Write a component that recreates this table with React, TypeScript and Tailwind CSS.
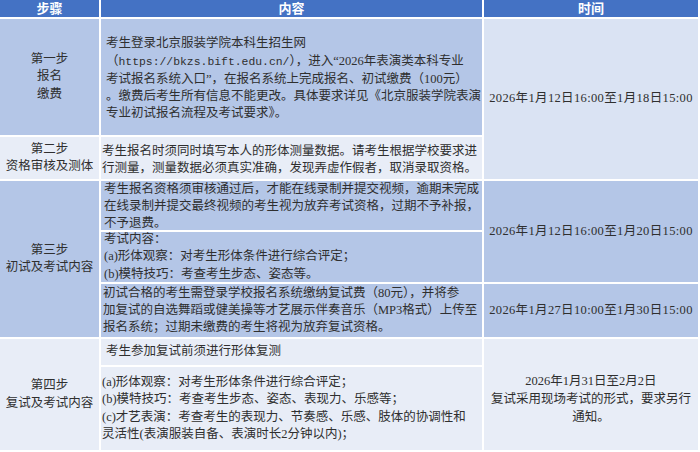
const font = "font-['Liberation_Serif','Noto_Sans_CJK_SC',serif]";

const mid = "bg-[#b4c6e7]";
const light = "bg-[#dae3f3]";
const pale = "bg-[#e8edf7]";

function Lines({ lines }: { lines: React.ReactNode[] }) {
  return (
    <div>
      {lines.map((l, i) => (
        <div key={i} className="whitespace-nowrap">
          {l}
        </div>
      ))}
    </div>
  );
}

function StepCell({ className, lines }: { className: string; lines: string[] }) {
  return (
    <div className={`${className} flex items-center justify-center text-center`}>
      <Lines lines={lines} />
    </div>
  );
}

function TextCell({ className, lines, pad = "pl-[3px]" }: { className: string; lines: React.ReactNode[]; pad?: string }) {
  return (
    <div className={`${className} ${pad} flex items-center`}>
      <Lines lines={lines} />
    </div>
  );
}

export default function App() {
  return (
    <div
      className={`${font} grid w-[698px] grid-cols-[99px_381px_214px] grid-rows-[17px_116px_42px_49px_50px_53px_26px_83px] gap-[2px] bg-white text-[12.5px] leading-[17.3px] text-[#2f2f2f]`}
    >
      {/* header */}
      <div className="col-start-1 row-start-1 flex items-center justify-center bg-[#4472c4] text-[13px] font-semibold text-white">
        步骤
      </div>
      <div className="col-start-2 row-start-1 flex items-center justify-center bg-[#4472c4] text-[13px] font-semibold text-white">
        内容
      </div>
      <div className="col-start-3 row-start-1 flex items-center justify-center bg-[#4472c4] text-[13px] font-semibold text-white">
        时间
      </div>

      {/* 第一步 */}
      <StepCell className={`col-start-1 row-start-2 ${mid}`} lines={["第一步", "报名", "缴费"]} />
      <TextCell
        className={`col-start-2 row-start-2 ${mid} pt-[4px]`}
        pad="pl-[5px]"
        lines={[
          "考生登录北京服装学院本科生招生网",
          <>
            （<span className="font-['Liberation_Mono',monospace] text-[11.4px]">https://bkzs.bift.edu.cn/</span>），进入“2026年表演类本科专业
          </>,
          "考试报名系统入口”，在报名系统上完成报名、初试缴费（100元）",
          "。缴费后考生所有信息不能更改。具体要求详见《北京服装学院表演",
          "专业初试报名流程及考试要求》。",
        ]}
      />
      <StepCell
        className={`col-start-3 row-start-2 row-span-2 ${light} tracking-[0.35px]`}
        lines={["2026年1月12日16:00至1月18日15:00"]}
      />

      {/* 第二步 */}
      <StepCell className={`col-start-1 row-start-3 ${pale}`} lines={["第二步", "资格审核及测体"]} />
      <TextCell
        className={`col-start-2 row-start-3 ${pale} pt-[4px]`}
        pad="pl-[1px]"
        lines={[
          "考生报名时须同时填写本人的形体测量数据。请考生根据学校要求进",
          "行测量，测量数据必须真实准确，发现弄虚作假者，取消录取资格。",
        ]}
      />

      {/* 第三步 */}
      <StepCell className={`col-start-1 row-start-4 row-span-3 ${mid}`} lines={["第三步", "初试及考试内容"]} />
      <TextCell
        className={`col-start-2 row-start-4 ${mid} pt-[2px]`}
        lines={[
          "考生报名资格须审核通过后，才能在线录制并提交视频，逾期未完成",
          "在线录制并提交最终视频的考生视为放弃考试资格，过期不予补报，",
          "不予退费。",
        ]}
      />
      <StepCell
        className={`col-start-3 row-start-4 row-span-2 ${mid} tracking-[0.35px]`}
        lines={["2026年1月12日16:00至1月20日15:00"]}
      />
      <TextCell
        className={`col-start-2 row-start-5 ${mid}`}
        lines={["考试内容：", "(a)形体观察：对考生形体条件进行综合评定；", "(b)模特技巧：考查考生步态、姿态等。"]}
      />
      <TextCell
        className={`col-start-2 row-start-6 ${mid}`}
        pad="pl-[2px]"
        lines={[
          "初试合格的考生需登录学校报名系统缴纳复试费（80元），并将参",
          "加复试的自选舞蹈或健美操等才艺展示伴奏音乐（MP3格式）上传至",
          "报名系统；过期未缴费的考生将视为放弃复试资格。",
        ]}
      />
      <StepCell
        className={`col-start-3 row-start-6 ${mid} tracking-[0.35px]`}
        lines={["2026年1月27日10:00至1月30日15:00"]}
      />

      {/* 第四步 */}
      <StepCell className={`col-start-1 row-start-7 row-span-2 ${pale}`} lines={["第四步", "复试及考试内容"]} />
      <TextCell className={`col-start-2 row-start-7 ${pale}`} pad="pl-[5px]" lines={["考生参加复试前须进行形体复测"]} />
      <TextCell
        className={`col-start-2 row-start-8 ${pale}`}
        pad="pl-[1px]"
        lines={[
          "(a)形体观察：对考生形体条件进行综合评定；",
          "(b)模特技巧：考查考生步态、姿态、表现力、乐感等；",
          "(c)才艺表演：考查考生的表现力、节奏感、乐感、肢体的协调性和",
          "灵活性(表演服装自备、表演时长2分钟以内)；",
        ]}
      />
      <StepCell
        className={`col-start-3 row-start-7 row-span-2 ${pale} pt-[8px] leading-[18px]`}
        lines={["2026年1月31日至2月2日", "复试采用现场考试的形式，要求另行", "通知。"]}
      />
    </div>
  );
}
